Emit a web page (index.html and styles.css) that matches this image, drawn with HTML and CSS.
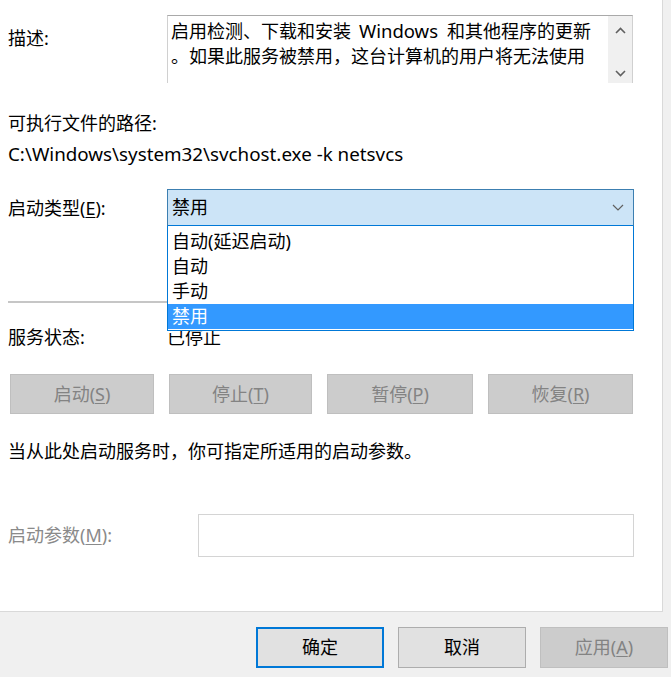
FILE: index.html
```html
<!DOCTYPE html>
<html lang="zh-CN">
<head>
<meta charset="utf-8">
<title>服务属性</title>
<link rel="stylesheet" href="styles.css">
</head>
<body>
<div class="panel">
  <div class="row desc-row">
    <div class="label desc-label">描述:</div>
    <div class="descbox">
      <div class="desc-text">
        <div class="line">启用检测、下载和安装<span class="latin">Windows</span>和其他程序的更新</div>
        <div class="line">。如果此服务被禁用，这台计算机的用户将无法使用</div>
      </div>
      <div class="vscroll">
        <svg class="arrow" width="11" height="7" viewBox="0 0 11 7"><path d="M1 6 L5.5 1.5 L10 6" fill="none" stroke="#606060" stroke-width="1.6"/></svg>
        <svg class="arrow" width="11" height="7" viewBox="0 0 11 7"><path d="M1 1 L5.5 5.5 L10 1" fill="none" stroke="#606060" stroke-width="1.6"/></svg>
      </div>
    </div>
  </div>

  <div class="text path-label">可执行文件的路径:</div>
  <div class="text path">C:\Windows\system32\svchost.exe -k netsvcs</div>

  <div class="row type-row">
    <div class="label">启动类型(<u>E</u>):</div>
    <div class="combo">
      <span class="combo-value">禁用</span>
      <svg class="combo-arrow" width="12" height="7" viewBox="0 0 12 7"><path d="M1 1 L6 6 L11 1" fill="none" stroke="#606060" stroke-width="1.2"/></svg>
      <ul class="droplist">
        <li class="opt">自动(延迟启动)</li>
        <li class="opt">自动</li>
        <li class="opt">手动</li>
        <li class="opt selected">禁用</li>
      </ul>
    </div>
  </div>

  <div class="separator"></div>

  <div class="row status-row">
    <div class="label">服务状态:</div>
    <div class="status-value">已停止</div>
  </div>

  <div class="btn-row">
    <div class="btn disabled w144">启动(<u>S</u>)</div>
    <div class="btn disabled w143">停止(<u>T</u>)</div>
    <div class="btn disabled w146">暂停(<u>P</u>)</div>
    <div class="btn disabled w145">恢复(<u>R</u>)</div>
  </div>

  <div class="text hint">当从此处启动服务时，你可指定所适用的启动参数。</div>

  <div class="row param-row">
    <div class="label param-label">启动参数(<u>M</u>):</div>
    <div class="param-input"></div>
  </div>
</div>

<div class="footer">
  <div class="fbtn default">确定</div>
  <div class="fbtn">取消</div>
  <div class="fbtn disabled">应用(<u>A</u>)</div>
</div>
</body>
</html>
```

FILE: styles.css
```css
* { box-sizing: border-box; }

html, body {
  margin: 0;
  padding: 0;
}

body {
  width: 671px;
  height: 677px;
  overflow: hidden;
  background: #f0f0f0;
  font-family: "Noto Sans", "Noto Sans CJK SC", sans-serif;
  font-size: 18px;
  color: #000;
  line-height: 25px;
}

u { text-decoration: underline; text-underline-offset: 2px; text-decoration-thickness: 1px; }

.panel {
  width: 663px;
  height: 612px;
  background: #fff;
  border-right: 1px solid #d9d9d9;
  border-bottom: 1px solid #d9d9d9;
  padding: 15px 0 0 8px;
  display: flex;
  flex-direction: column;
}

.row { display: flex; }

.label {
  width: 159px;
  flex: none;
  white-space: nowrap;
}

.desc-row { height: 68px; }
.desc-label { padding-top: 11px; }

.descbox {
  width: 466px;
  height: 68px;
  border: 1px solid #d0d0d0;
  border-top-color: #a9a9a9;
  border-bottom: none;
  display: flex;
}

.desc-text {
  flex: 1;
  padding: 2px 0 0 3px;
  white-space: nowrap;
  overflow: hidden;
}

.latin {
  font-size: 18.5px;
  margin: 0 9px 0 8px;
}

.vscroll {
  width: 24px;
  flex: none;
  background: #f0f0f0;
  display: flex;
  flex-direction: column;
  align-items: center;
  justify-content: space-between;
  padding: 11px 0 6px;
}

.text { white-space: nowrap; }
.path-label { margin-top: 28px; }
.path { margin-top: 6px; font-size: 18.8px; }

.type-row {
  margin-top: 22px;
  align-items: center;
  height: 38px;
}

.combo {
  position: relative;
  width: 467px;
  height: 38px;
  background: #cce4f7;
  border: 1px solid #3c7fb1;
  border-bottom: 2px solid #0078d7;
  display: flex;
  align-items: center;
  padding-left: 4px;
}

.combo-value { flex: 1; }
.combo-arrow { margin-right: 9px; }

.droplist {
  position: absolute;
  left: -1px;
  top: 36px;
  width: 467px;
  margin: 0;
  padding: 3px 0 1px;
  list-style: none;
  background: #fff;
  border: 1px solid #0078d7;
  border-top: none;
  z-index: 2;
}

.opt {
  height: 25px;
  line-height: 25px;
  padding-left: 4px;
}

.opt.selected {
  background: #3399ff;
  color: #fff;
}

.separator {
  margin-top: 74px;
  width: 625px;
  height: 2px;
  background: #c6c6c6;
}

.status-row { margin-top: 22px; }

.btn-row {
  margin-top: 24px;
  margin-left: 2px;
  width: 623px;
  display: flex;
  justify-content: space-between;
}

.btn {
  height: 40px;
  display: flex;
  align-items: center;
  justify-content: center;
  white-space: nowrap;
}

.btn.disabled {
  background: #cccccc;
  border: 1px solid #bfbfbf;
  color: #838383;
}

.w144 { width: 144px; }
.w143 { width: 143px; }
.w146 { width: 146px; }
.w145 { width: 145px; }

.hint { margin-top: 25px; }

.param-row {
  margin-top: 50px;
  align-items: center;
}

.param-label {
  width: 190px;
  color: #8a8a8a;
}

.param-input {
  width: 436px;
  height: 43px;
  border: 1px solid #d4d4d4;
  background: #fff;
}

.footer {
  display: flex;
  justify-content: flex-end;
  gap: 14px;
  padding: 15px 3px 0 0;
}

.fbtn {
  width: 128px;
  height: 41px;
  background: #e1e1e1;
  border: 1px solid #adadad;
  display: flex;
  align-items: center;
  justify-content: center;
  white-space: nowrap;
}

.fbtn.default {
  border: 2px solid #0078d7;
}

.fbtn.disabled {
  background: #cccccc;
  border-color: #bfbfbf;
  color: #838383;
}
```
